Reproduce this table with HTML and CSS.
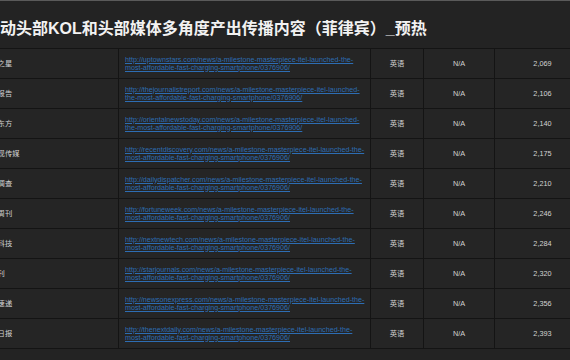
FILE: index.html
```html
<!DOCTYPE html>
<html lang="zh-CN">
<head>
<meta charset="utf-8">
<title>KOL</title>
<link rel="stylesheet" href="styles.css">
</head>
<body>
<div class="page">
  <h1 class="title">动头部KOL和头部媒体多角度产出传播内容（菲律宾）_预热</h1>
  <div class="scroller">
    <table class="grid">
      <colgroup>
        <col class="c-name"><col class="c-link"><col class="c-lang"><col class="c-na"><col class="c-num">
      </colgroup>
      <tbody>
        <tr><td class="name">上城之星</td><td class="link"><a href="#">http://uptownstars.com/news/a-milestone-masterpiece-itel-launched-the-most-affordable-fast-charging-smartphone/0376906/</a></td><td class="mid">英语</td><td class="mid">N/A</td><td class="mid">2,069</td></tr>
        <tr><td class="name">记者报告</td><td class="link"><a href="#">http://thejournalistreport.com/news/a-milestone-masterpiece-itel-launched-the-most-affordable-fast-charging-smartphone/0376906/</a></td><td class="mid">英语</td><td class="mid">N/A</td><td class="mid">2,106</td></tr>
        <tr><td class="name">今日东方</td><td class="link"><a href="#">http://orientalnewstoday.com/news/a-milestone-masterpiece-itel-launched-the-most-affordable-fast-charging-smartphone/0376906/</a></td><td class="mid">英语</td><td class="mid">N/A</td><td class="mid">2,140</td></tr>
        <tr><td class="name">新发现传媒</td><td class="link"><a href="#">http://recentdiscovery.com/news/a-milestone-masterpiece-itel-launched-the-most-affordable-fast-charging-smartphone/0376906/</a></td><td class="mid">英语</td><td class="mid">N/A</td><td class="mid">2,175</td></tr>
        <tr><td class="name">每日调查</td><td class="link"><a href="#">http://dailydispatcher.com/news/a-milestone-masterpiece-itel-launched-the-most-affordable-fast-charging-smartphone/0376906/</a></td><td class="mid">英语</td><td class="mid">N/A</td><td class="mid">2,210</td></tr>
        <tr><td class="name">财富周刊</td><td class="link"><a href="#">http://fortuneweek.com/news/a-milestone-masterpiece-itel-launched-the-most-affordable-fast-charging-smartphone/0376906/</a></td><td class="mid">英语</td><td class="mid">N/A</td><td class="mid">2,246</td></tr>
        <tr><td class="name">新新科技</td><td class="link"><a href="#">http://nextnewtech.com/news/a-milestone-masterpiece-itel-launched-the-most-affordable-fast-charging-smartphone/0376906/</a></td><td class="mid">英语</td><td class="mid">N/A</td><td class="mid">2,284</td></tr>
        <tr><td class="name">星辰刊</td><td class="link"><a href="#">http://starjournals.com/news/a-milestone-masterpiece-itel-launched-the-most-affordable-fast-charging-smartphone/0376906/</a></td><td class="mid">英语</td><td class="mid">N/A</td><td class="mid">2,320</td></tr>
        <tr><td class="name">新闻速递</td><td class="link"><a href="#">http://newsonexpress.com/news/a-milestone-masterpiece-itel-launched-the-most-affordable-fast-charging-smartphone/0376906/</a></td><td class="mid">英语</td><td class="mid">N/A</td><td class="mid">2,356</td></tr>
        <tr><td class="name">次日日报</td><td class="link"><a href="#">http://thenextdaily.com/news/a-milestone-masterpiece-itel-launched-the-most-affordable-fast-charging-smartphone/0376906/</a></td><td class="mid">英语</td><td class="mid">N/A</td><td class="mid">2,393</td></tr>
      </tbody>
    </table>
  </div>
</div>
</body>
</html>
```
FILE: styles.css
```css
html, body {
  margin: 0;
  padding: 0;
  background: #232323;
}
.page {
  width: 570px;
  height: 360px;
  overflow: hidden;
  background: #232323;
  border-top: 1px solid #5a5a5a;
  box-sizing: border-box;
  font-family: "Liberation Sans", "Noto Sans CJK SC", sans-serif;
}
.title {
  margin: 0;
  padding: 20px 0 11px 0;
  height: 16px;
  line-height: 16px;
  font-size: 16px;
  font-weight: bold;
  color: #f2f2f2;
  white-space: nowrap;
  font-family: "Liberation Sans", "Noto Sans CJK SC", sans-serif;
}
.scroller {
  margin-left: -25px;
}
.grid {
  border-collapse: collapse;
  table-layout: fixed;
  width: 615px;
  background: #252525;
}
.c-name { width: 143px; }
.c-link { width: 252px; }
.c-lang { width: 53px; }
.c-na { width: 71px; }
.c-num { width: 96px; }
.grid tr {
  height: 30px;
}
.grid td {
  padding: 0 7px;
  border: 1px solid #141414;
  font-size: 7.3px;
  line-height: 8px;
  color: #d2d2d2;
  vertical-align: middle;
}
.grid td.name {
  text-align: left;
  white-space: nowrap;
  overflow: hidden;
}
.grid td.mid {
  text-align: center;
}
.grid td.link {
  padding: 0 5px 0 6px;
  font-size: 7.15px;
}
.grid td.link a {
  color: #2d6db3;
  text-decoration: underline;
}
```
